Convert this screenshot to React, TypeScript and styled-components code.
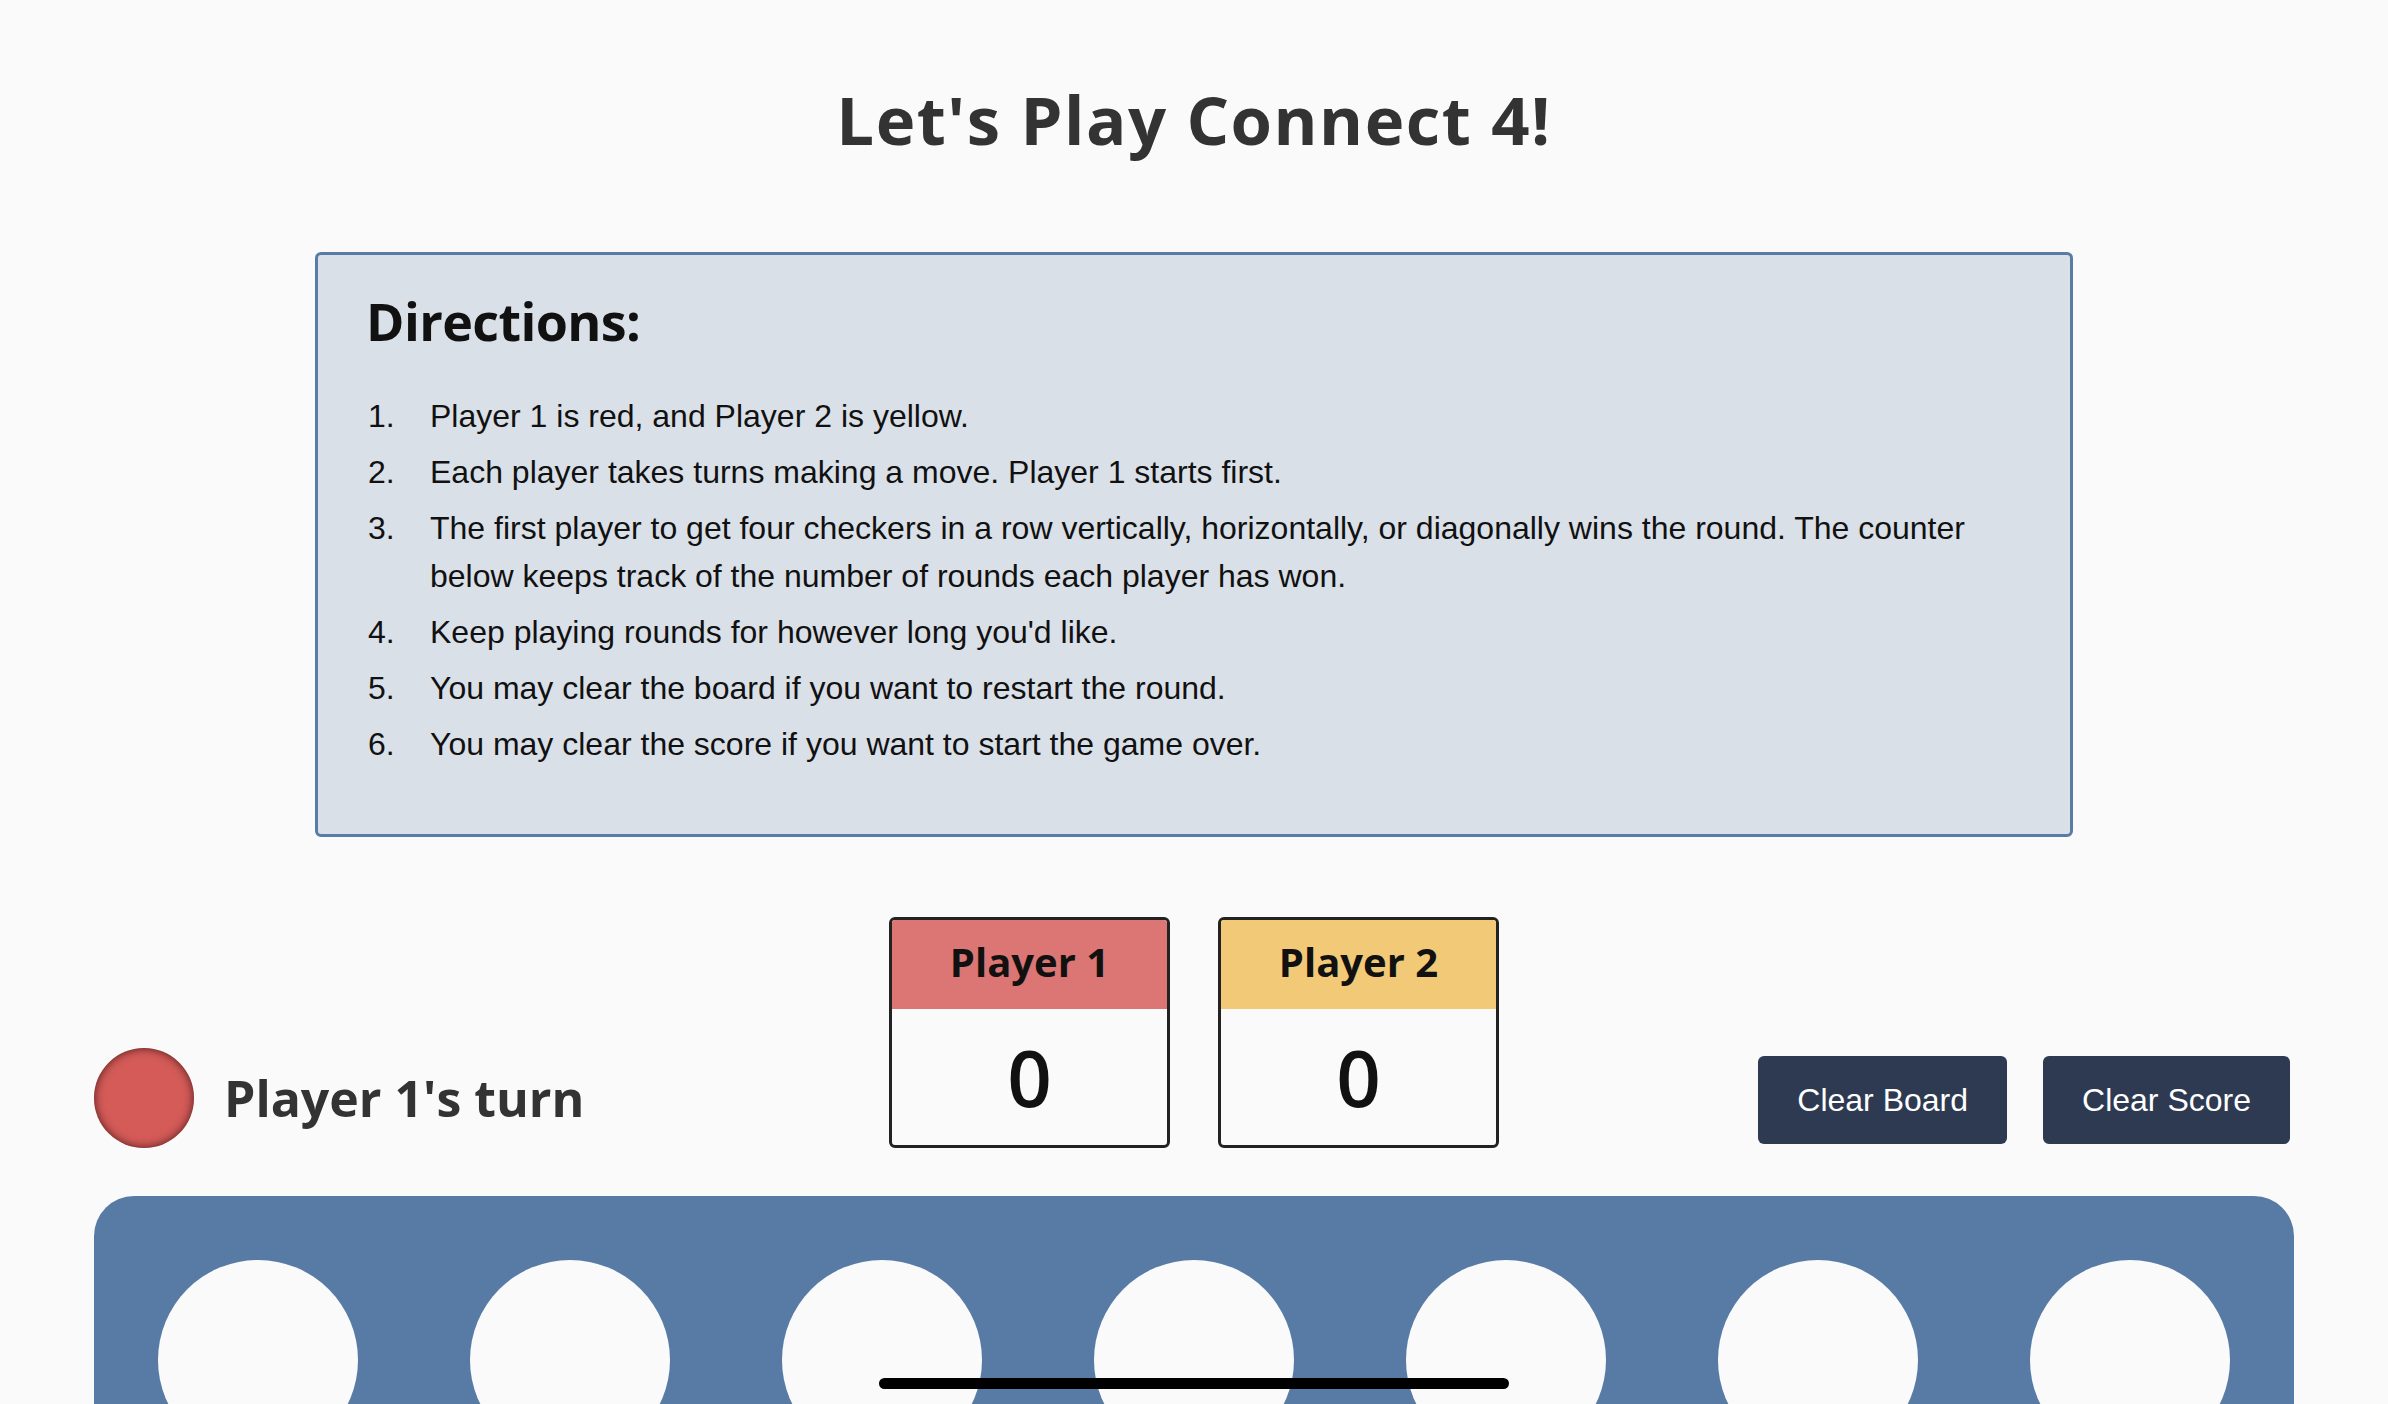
import React from "react";
import styled, { createGlobalStyle } from "styled-components";

const GlobalStyle = createGlobalStyle`
  html, body {
    margin: 0;
    padding: 0;
    background: #fafafa;
  }
  * { box-sizing: border-box; }
`;

const HEADING_FONT = `"Open Sans", "Noto Sans", sans-serif`;
const BODY_FONT = `"Liberation Sans", Arial, sans-serif`;

const Page = styled.main`
  display: flex;
  flex-direction: column;
  align-items: center;
  padding-top: 86px;
  background: #fafafa;
  min-height: 100vh;
`;

const Title = styled.h1`
  margin: 0;
  font-family: ${HEADING_FONT};
  font-weight: 700;
  font-size: 67px;
  line-height: 1;
  letter-spacing: 1.5px;
  color: #333333;
`;

const DirectionsBox = styled.section`
  margin-top: 99px;
  width: 1758px;
  background: #dae0e8;
  border: 3px solid #5a7ba6;
  border-radius: 6px;
  padding: 39px 46px 66px 50px;
`;

const DirectionsTitle = styled.h2`
  margin: 0 0 0 -2px;
  font-family: ${HEADING_FONT};
  font-weight: 700;
  font-size: 52px;
  line-height: 54px;
  letter-spacing: -0.6px;
  color: #111111;
`;

const List = styled.ol`
  list-style: none;
  margin: 44px 0 0;
  padding: 0;
  display: flex;
  flex-direction: column;
  gap: 8px;
`;

const Item = styled.li`
  display: grid;
  grid-template-columns: 62px 1fr;
  font-family: ${BODY_FONT};
  font-size: 32px;
  line-height: 48px;
  color: #111111;
`;

const Num = styled.span``;
const ItemText = styled.span``;

const Controls = styled.section`
  margin-top: 80px;
  width: 2200px;
  display: grid;
  grid-template-columns: 1fr auto 1fr;
  align-items: end;
`;

const Turn = styled.div`
  display: flex;
  align-items: center;
  gap: 30px;
`;

const TurnDisc = styled.div<{ $color: string }>`
  width: 100px;
  height: 100px;
  border-radius: 50%;
  background: ${(p) => p.$color};
  box-shadow: inset 0 0 10px rgba(40, 10, 10, 0.8);
`;

const TurnText = styled.span`
  font-family: ${HEADING_FONT};
  font-weight: 700;
  font-size: 50px;
  line-height: 1;
  color: #333333;
`;

const Scores = styled.div`
  display: flex;
  gap: 48px;
`;

const ScoreCard = styled.div`
  width: 281px;
  height: 231px;
  border: 3px solid #222222;
  border-radius: 6px;
  overflow: hidden;
  display: flex;
  flex-direction: column;
  background: #fafafa;
`;

const ScoreHeader = styled.div<{ $color: string }>`
  height: 89px;
  padding-bottom: 5px;
  background: ${(p) => p.$color};
  display: flex;
  align-items: center;
  justify-content: center;
  font-family: ${HEADING_FONT};
  font-weight: 700;
  font-size: 40px;
  line-height: 1;
  color: #111111;
`;

const ScoreValue = styled.div`
  flex: 1;
  display: flex;
  align-items: center;
  justify-content: center;
  font-family: ${HEADING_FONT};
  font-weight: 600;
  font-size: 78px;
  line-height: 1;
  color: #111111;
`;

const Buttons = styled.div`
  display: flex;
  justify-content: flex-end;
  gap: 36px;
  margin-bottom: 4px;
  padding-right: 4px;
`;

const ActionButton = styled.button`
  height: 88px;
  padding: 0 39px;
  border: none;
  border-radius: 6px;
  background: #2d3a52;
  color: #ffffff;
  font-family: ${BODY_FONT};
  font-size: 32px;
  cursor: pointer;
`;

const Board = styled.section`
  margin-top: 48px;
  width: 2200px;
  background: #587ba6;
  border-radius: 40px;
  padding: 64px;
  display: grid;
  grid-template-columns: repeat(7, 200px);
  column-gap: 112px;
  row-gap: 40px;
`;

const Hole = styled.div`
  width: 200px;
  height: 200px;
  border-radius: 50%;
  background: #fafafa;
`;

const HomeIndicator = styled.div`
  position: fixed;
  left: 50%;
  bottom: 15px;
  transform: translateX(-50%);
  width: 630px;
  height: 11px;
  border-radius: 6px;
  background: #000000;
`;

const directions = [
  "Player 1 is red, and Player 2 is yellow.",
  "Each player takes turns making a move. Player 1 starts first.",
  "The first player to get four checkers in a row vertically, horizontally, or diagonally wins the round. The counter below keeps track of the number of rounds each player has won.",
  "Keep playing rounds for however long you'd like.",
  "You may clear the board if you want to restart the round.",
  "You may clear the score if you want to start the game over.",
];

export default function App() {
  return (
    <>
      <GlobalStyle />
      <Page>
        <Title>Let's Play Connect 4!</Title>
        <DirectionsBox>
          <DirectionsTitle>Directions:</DirectionsTitle>
          <List>
            {directions.map((d, i) => (
              <Item key={i}>
                <Num>{i + 1}.</Num>
                <ItemText>{d}</ItemText>
              </Item>
            ))}
          </List>
        </DirectionsBox>
        <Controls>
          <Turn>
            <TurnDisc $color="#d45b58" />
            <TurnText>Player 1's turn</TurnText>
          </Turn>
          <Scores>
            <ScoreCard>
              <ScoreHeader $color="#dc7674">Player 1</ScoreHeader>
              <ScoreValue>0</ScoreValue>
            </ScoreCard>
            <ScoreCard>
              <ScoreHeader $color="#f2c977">Player 2</ScoreHeader>
              <ScoreValue>0</ScoreValue>
            </ScoreCard>
          </Scores>
          <Buttons>
            <ActionButton>Clear Board</ActionButton>
            <ActionButton>Clear Score</ActionButton>
          </Buttons>
        </Controls>
        <Board>
          {Array.from({ length: 42 }).map((_, i) => (
            <Hole key={i} />
          ))}
        </Board>
      </Page>
      <HomeIndicator />
    </>
  );
}
